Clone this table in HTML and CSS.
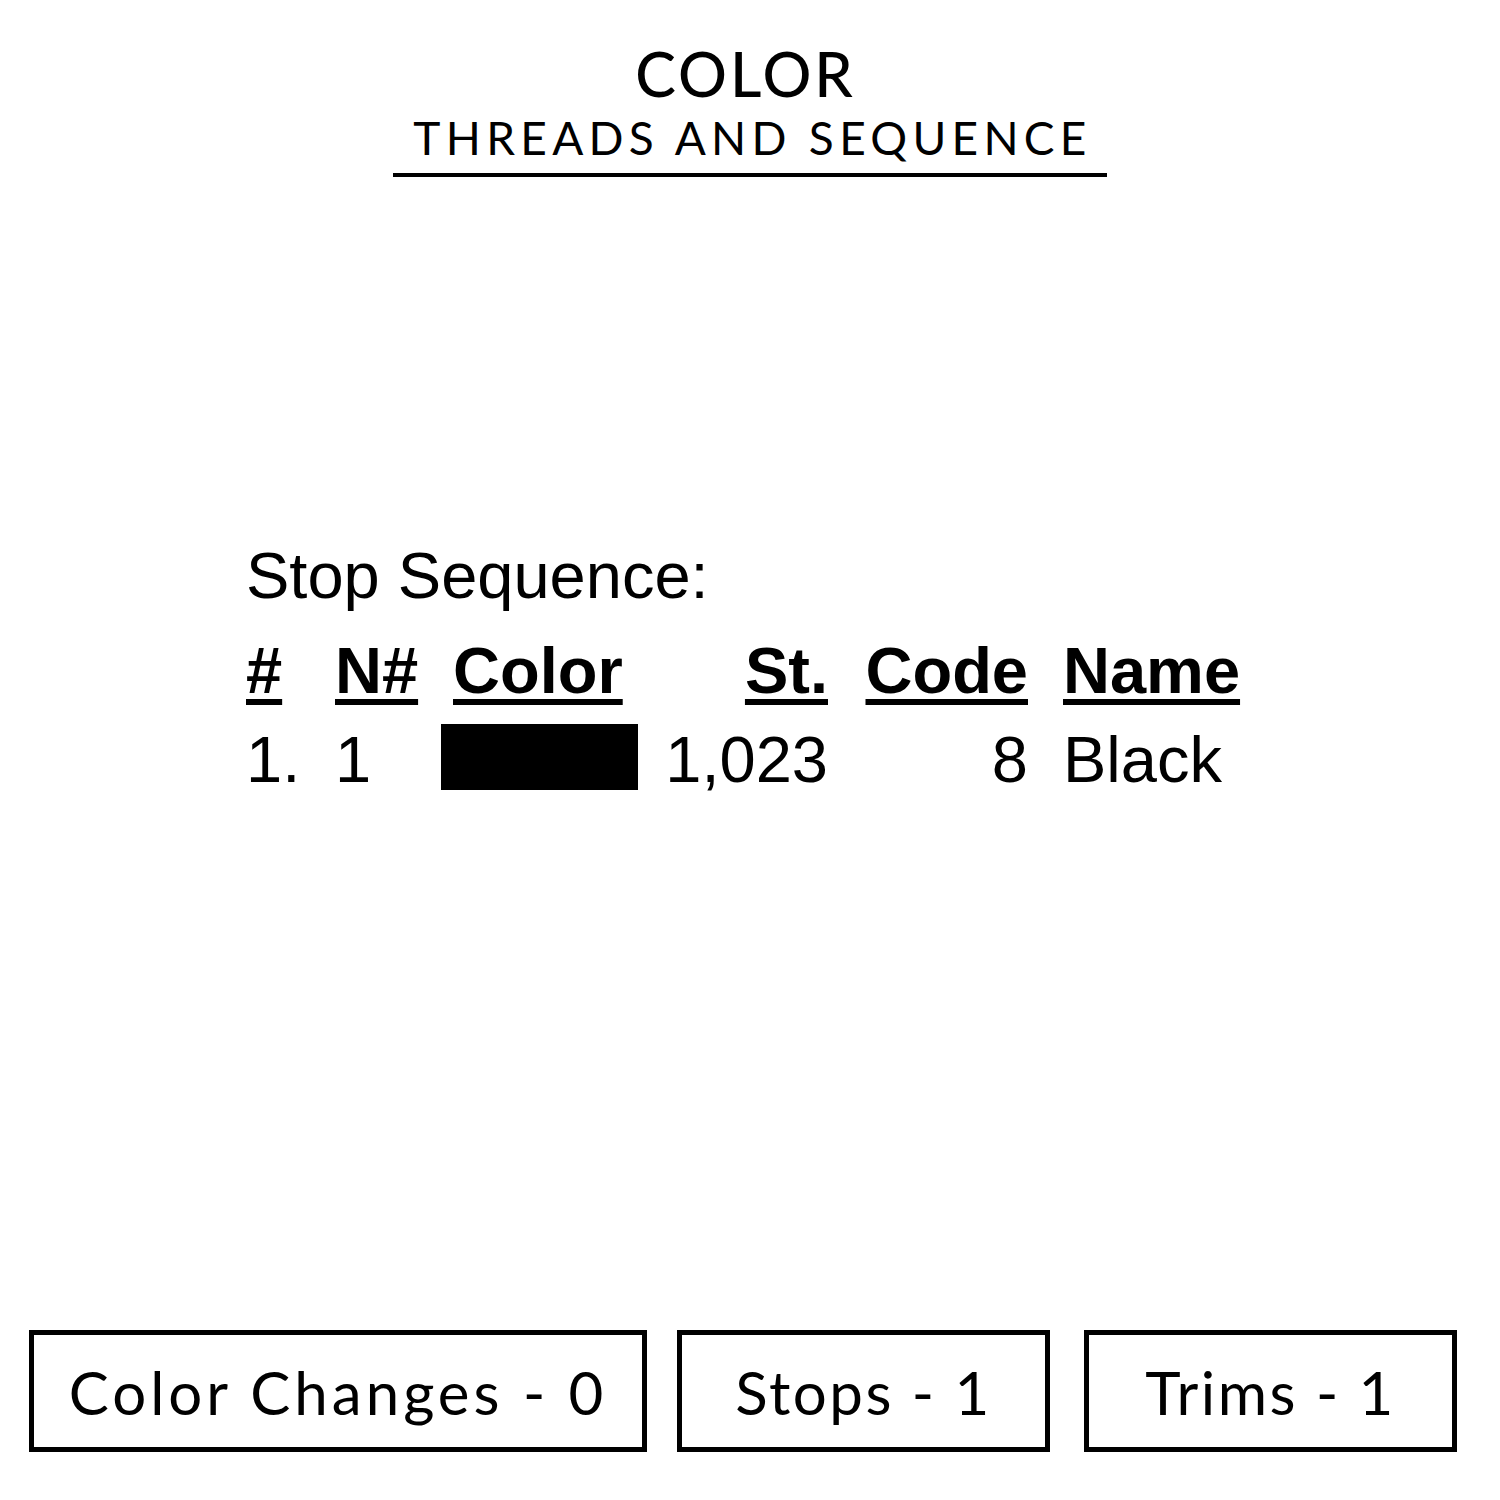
FILE: index.html
```html
<!DOCTYPE html>
<html>
<head>
<meta charset="utf-8">
<link rel="stylesheet" href="styles.css">
</head>
<body>
<div class="page">
  <header class="head">
    <div class="title">COLOR</div>
    <div class="subtitle">THREADS AND SEQUENCE</div>
  </header>

  <section class="seq">
    <div class="seq-label">Stop Sequence:</div>
    <div class="grid">
      <div class="th"><span class="u">#</span></div>
      <div class="th"><span class="u">N#</span></div>
      <div class="th th-color"><span class="u">Color</span></div>
      <div class="th right"><span class="u">St.</span></div>
      <div class="th right"><span class="u">Code</span></div>
      <div class="th name"><span class="u">Name</span></div>

      <div class="td">1.</div>
      <div class="td">1</div>
      <div class="td"><div class="swatch"></div></div>
      <div class="td right">1,023</div>
      <div class="td right">8</div>
      <div class="td name">Black</div>
    </div>
  </section>

  <footer class="stats">
    <div class="stat stat-wide">Color Changes - 0</div>
    <div class="stat">Stops - 1</div>
    <div class="stat stat-last">Trims - 1</div>
  </footer>
</div>
</body>
</html>
```

FILE: styles.css
```css
html, body {
  margin: 0;
  padding: 0;
  background: #fff;
  color: #000;
}

.page {
  width: 1500px;
  height: 1500px;
  display: flex;
  flex-direction: column;
}

.head {
  display: flex;
  flex-direction: column;
  align-items: center;
  font-family: Lato, "Open Sans", sans-serif;
}

.title {
  margin-top: 43px;
  font-size: 61px;
  line-height: 61px;
  font-weight: 500;
  letter-spacing: 3px;
  margin-right: 9px;
}

.subtitle {
  margin-top: 11px;
  font-size: 46px;
  line-height: 45px;
  font-weight: 400;
  letter-spacing: 5.3px;
  padding: 0 15px 13px 20px;
  border-bottom: 4px solid #000;
}

.seq {
  margin-top: 367px;
  padding-left: 246px;
  font-family: "Liberation Sans", Arial, sans-serif;
  font-size: 65px;
}

.seq-label {
  line-height: 64px;
}

.grid {
  margin-top: 31px;
  display: grid;
  grid-template-columns: 89px 106px 197px 190px 200px auto;
  grid-auto-rows: 64px;
  row-gap: 25px;
  line-height: 64px;
  width: 1100px;
}

.th {
  font-weight: bold;
}

.th-color {
  padding-left: 12px;
}

.u {
  text-decoration: underline;
  text-decoration-thickness: 6px;
  text-underline-offset: 6px;
}

.right {
  text-align: right;
}

.name {
  padding-left: 35px;
}

.swatch {
  margin-top: -4px;
  width: 197px;
  height: 66px;
  background: #000;
}

.stats {
  margin-top: auto;
  margin-bottom: 48px;
  padding-left: 29px;
  display: flex;
  gap: 30px;
  font-family: Lato, "Open Sans", sans-serif;
}

.stat {
  box-sizing: border-box;
  width: 373px;
  height: 122px;
  border: 5px solid #000;
  display: flex;
  align-items: center;
  justify-content: center;
  font-size: 60px;
  letter-spacing: 2.5px;
  padding-top: 2px;
}

.stat-wide {
  width: 618px;
  letter-spacing: 4px;
}

.stat-last {
  margin-left: 4px;
}
```
